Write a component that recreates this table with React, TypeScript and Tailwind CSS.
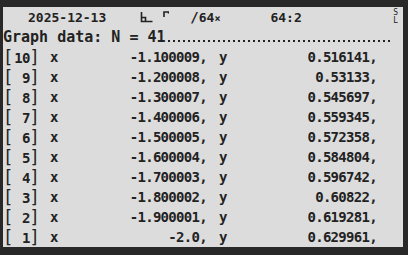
import React from "react";

const rows = [
  ["10", "-1.100009,", "0.516141,"],
  ["9", "-1.200008,", "0.53133,"],
  ["8", "-1.300007,", "0.545697,"],
  ["7", "-1.400006,", "0.559345,"],
  ["6", "-1.500005,", "0.572358,"],
  ["5", "-1.600004,", "0.584804,"],
  ["4", "-1.700003,", "0.596742,"],
  ["3", "-1.800002,", "0.60822,"],
  ["2", "-1.900001,", "0.619281,"],
  ["1", "-2.0,", "0.629961,"],
];

const mono = { fontFamily: '"DejaVu Sans Mono", "Liberation Mono", monospace' };

export default function App() {
  return (
    <div className="w-[408px] h-[255px] bg-[#282828] pt-[7px] pl-[3px]">
      <div
        className="w-[400px] h-[240px] bg-[#dcdcdc] text-[#222] font-bold flex flex-col overflow-hidden whitespace-nowrap"
        style={mono}
      >
        {/* header */}
        <div className="h-[20px] flex items-center text-[13px] leading-none">
          <span className="ml-[25px] shrink-0">2025-12-13</span>
          <svg className="ml-[34px] shrink-0" width="13" height="12" viewBox="0 0 13 12">
            <path d="M1.5 1V10.5H12.5M1.5 6.5H5.5V10.5" stroke="#222" strokeWidth="1.6" fill="none" />
          </svg>
          <svg className="ml-[10px] -mt-[6px] shrink-0" width="6" height="6" viewBox="0 0 6 6">
            <path d="M1 6V1H5.5V2.5" stroke="#222" strokeWidth="1.6" fill="none" />
          </svg>
          <span className="ml-[21px] flex items-end shrink-0">
            <span className="text-[14px]">/</span>
            <span>64</span>
            <span className="text-[10px]">×</span>
          </span>
          <span className="ml-[50px] shrink-0">64:2</span>
          <span className="ml-auto mr-[5px] flex flex-col text-[8px] leading-[8px] font-normal">
            <span>S</span>
            <span>L</span>
          </span>
        </div>
        {/* graph data line */}
        <div className="h-[20px] flex items-center text-[15px] leading-none">
          <span>Graph data: N = 41</span>
          <div className="ml-[2px] mt-[7px] w-[222px] h-[2px] bg-[repeating-linear-gradient(to_right,#222_0_2px,transparent_2px_5px)]" />
        </div>
        {rows.map(([n, x, y]) => (
          <div key={n} className="h-[20px] flex items-center text-[14px] leading-none">
            <span className="w-[10px] text-[17px] font-normal">[</span>
            <span className="w-[26px] text-right tracking-[-0.8px]">
              {n}
              <span className="text-[17px] font-normal">]</span>
            </span>
            <span className="w-[11px]" />
            <span className="w-[10px]">x</span>
            <span className="w-[147px] text-right tracking-[-0.7px]">{x}</span>
            <span className="w-[12px]" />
            <span className="w-[10px]">y</span>
            <span className="w-[148px] text-right tracking-[-0.7px]">{y}</span>
          </div>
        ))}
      </div>
    </div>
  );
}
